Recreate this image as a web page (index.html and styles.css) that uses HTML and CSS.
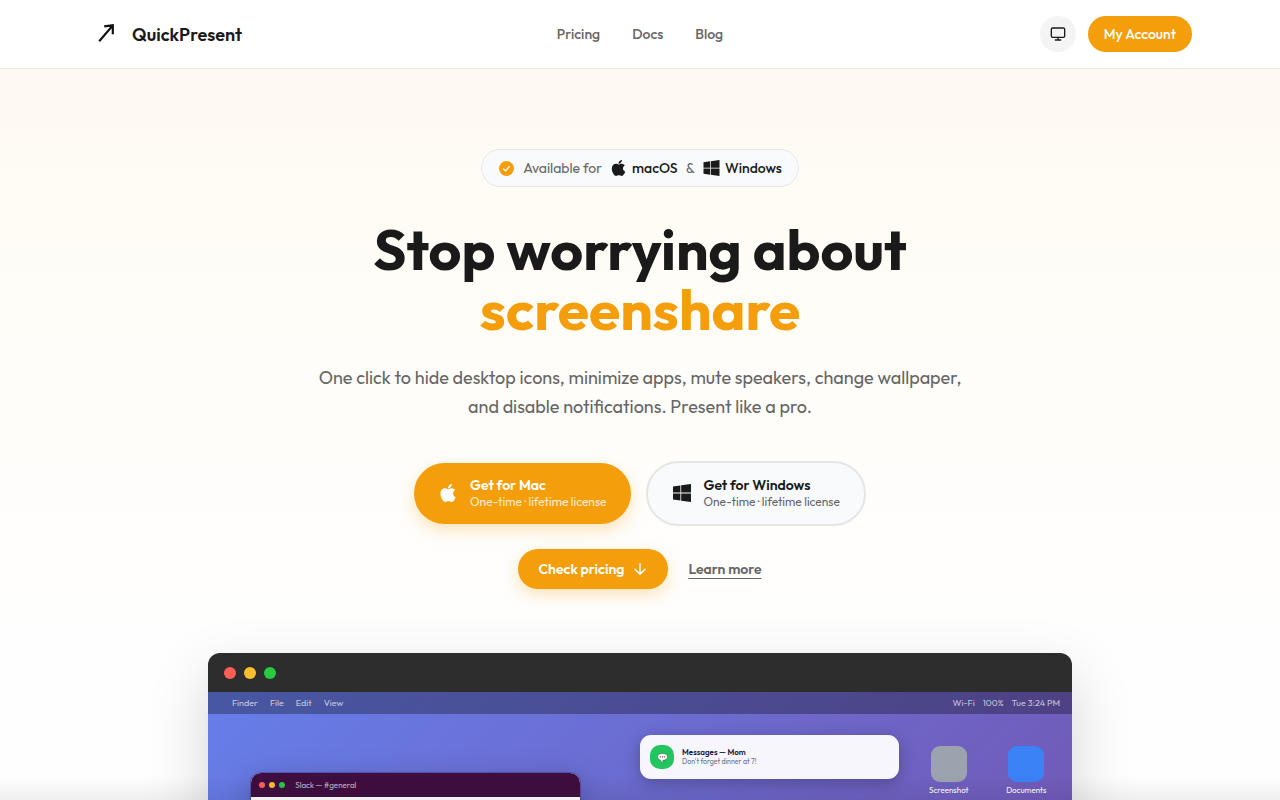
FILE: index.html
```html
<!DOCTYPE html>
<html lang="en">
<head>
<meta charset="utf-8">
<meta name="viewport" content="width=device-width, initial-scale=1">
<title>QuickPresent</title>
<link rel="stylesheet" href="styles.css">
</head>
<body>
<svg class="symbols" aria-hidden="true">
  <symbol id="apple" viewBox="0 32 384 448"><path d="M318.7 268.7c-.2-36.7 16.4-64.4 50-84.8-18.8-26.9-47.2-41.7-84.7-44.6-35.5-2.8-74.3 20.7-88.5 20.7-15 0-49.4-19.7-76.4-19.7C63.3 141.2 4 184.8 4 273.5q0 39.3 14.4 81.2c12.8 36.7 59 126.7 107.2 125.2 25.2-.6 43-17.9 75.8-17.9 31.8 0 48.3 17.9 76.4 17.9 48.6-.7 90.4-82.5 102.6-119.3-65.2-30.7-61.7-90-61.7-91.9zm-56.6-164.2c27.3-32.4 24.8-61.9 24-72.5-24.1 1.4-52 16.4-67.9 34.9-17.5 19.8-27.8 44.3-25.6 71.9 26.1 2 49.9-11.4 69.5-34.3z"/></symbol>
  <symbol id="windows" viewBox="0 32 448 448"><path d="M0 93.7l183.6-25.3v177.4H0V93.7zm0 324.6l183.6 25.3V268.4H0v149.9zm203.8 28L448 480V268.4H203.8v177.9zm0-380.6v180.1H448V32L203.8 65.7z"/></symbol>
</svg>

<header class="site-header">
  <div class="header-inner">
    <a class="brand" href="#">
      <svg class="brand-mark" viewBox="0 0 36 36" aria-hidden="true"><path d="M11.2 25.200 24.600 9.600M16.200 10.300l8.600-1v8.900"/></svg>
      <span>QuickPresent</span>
    </a>
    <nav class="nav">
      <a href="#">Pricing</a>
      <a href="#">Docs</a>
      <a href="#">Blog</a>
    </nav>
    <div class="header-actions">
      <button class="theme-button" type="button" aria-label="Theme">
        <svg viewBox="0 0 24 24" aria-hidden="true"><rect x="2" y="3" width="20" height="14" rx="2"/><path d="M12 17v4M8 21h8"/></svg>
      </button>
      <a class="account" href="#">My Account</a>
    </div>
  </div>
</header>

<main class="hero">
  <div class="badge">
    <svg class="badge-check" viewBox="0 0 16 16" aria-hidden="true"><circle cx="8" cy="8" r="7"/><path d="m5.200 8.400 1.900 1.800 3.700-4.200"/></svg>
    <span>Available for</span>
    <span class="platform"><svg class="icon-small" aria-hidden="true"><use href="#apple"/></svg>macOS</span>
    <span>&amp;</span>
    <span class="platform"><svg class="icon-small" aria-hidden="true"><use href="#windows"/></svg>Windows</span>
  </div>

  <h1 class="title">Stop worrying about <span class="accent">screenshare</span></h1>
  <p class="lead">One click to hide desktop icons, minimize apps, mute speakers, change wallpaper, and disable notifications. Present like a pro.</p>

  <div class="downloads">
    <a class="download primary" href="#">
      <svg class="icon-large" aria-hidden="true"><use href="#apple"/></svg>
      <span class="download-text"><strong>Get for Mac</strong><small>One-time · lifetime license</small></span>
    </a>
    <a class="download secondary" href="#">
      <svg class="icon-large" aria-hidden="true"><use href="#windows"/></svg>
      <span class="download-text"><strong>Get for Windows</strong><small>One-time · lifetime license</small></span>
    </a>
  </div>

  <div class="more">
    <a class="check-pricing" href="#">Check pricing
      <svg viewBox="0 0 16 16" aria-hidden="true"><path d="M8 2.700v10.600M2.900 8.200 8 13.300l5.100-5.100"/></svg>
    </a>
    <a class="learn" href="#">Learn more</a>
  </div>

  <section class="mockup">
    <div class="titlebar"><i class="dot red"></i><i class="dot yellow"></i><i class="dot green"></i></div>
    <div class="desktop">
      <div class="menubar">
        <div class="menu-left"><span>Finder</span><span>File</span><span>Edit</span><span>View</span></div>
        <div class="menu-right"><span>Wi-Fi</span><span>100%</span><span>Tue 3:24 PM</span></div>
      </div>
      <div class="app-window">
        <div class="app-bar"><i class="dot red"></i><i class="dot yellow"></i><i class="dot green"></i><span>Slack — #general</span></div>
      </div>
      <div class="notification">
        <span class="message-icon">
          <svg viewBox="0 0 12 12" aria-hidden="true"><path class="bubble" d="M6 1.500c3.200 0 5.400 1.500 5.400 3.800S9.200 9.100 6.200 9.100C6.200 10.300 7 11 8 11.300 5.800 11.500 4.100 10.600 3.700 8.800 1.800 8.200.6 7 .6 5.300.6 3 2.800 1.500 6 1.500z"/><path class="dots" d="M3 5.300h1.300M5.400 5.300h1.300M7.800 5.300h1.300"/></svg>
        </span>
        <span class="notification-text"><strong>Messages — Mom</strong><span>Don't forget dinner at 7!</span></span>
      </div>
      <div class="desktop-icons">
        <div class="file"><i class="file-icon gray"></i><span>Screenshot</span></div>
        <div class="file"><i class="file-icon blue"></i><span>Documents</span></div>
      </div>
    </div>
  </section>
</main>
<div class="bottom-shade"></div>
</body>
</html>
```
FILE: styles.css
```css
* { box-sizing: border-box; }
html { scrollbar-width: none; }
body {
  margin: 0;
  background: #fefefe;
  color: #1a1a1a;
  font-family: Outfit, Lato, sans-serif;
}
a { color: inherit; text-decoration: none; }
.symbols { position: absolute; width: 0; height: 0; }

.site-header { background: #fff; border-bottom: 1px solid #e8e5e3; }
.header-inner {
  display: grid;
  grid-template-columns: 1fr auto 1fr;
  align-items: center;
  max-width: 1152px;
  height: 68px;
  margin: 0 auto;
  padding: 0 24px;
}
.brand { display: flex; align-items: center; gap: 8px; font-size: 18px; font-weight: 600; }
.brand-mark { width: 36px; height: 36px; fill: none; stroke: #111; stroke-width: 2.2; }
.nav { display: flex; gap: 32px; color: #666; font-size: 14px; font-weight: 500; }
.header-actions { display: flex; justify-content: flex-end; align-items: center; gap: 12px; }
.theme-button {
  display: grid;
  place-items: center;
  width: 36px;
  height: 36px;
  padding: 0;
  border: 0;
  border-radius: 50%;
  background: #f4f4f4;
}
.theme-button svg {
  width: 16px;
  height: 16px;
  fill: none;
  stroke: #1a1a1a;
  stroke-width: 2;
  stroke-linecap: round;
  stroke-linejoin: round;
}
.account {
  padding: 0 16px;
  border-radius: 18px;
  background: #f59e0b;
  color: #fff;
  font-size: 14px;
  font-weight: 500;
  line-height: 36px;
}

.hero {
  display: flex;
  flex-direction: column;
  align-items: center;
  padding: 80px 24px;
  background: linear-gradient(#fef9f1 0, #fffcf5 120px, #fffdf9 300px, #fefefe 600px);
}
.badge {
  display: flex;
  align-items: center;
  gap: 8px;
  height: 38px;
  padding: 0 16px;
  border: 1px solid #e5e7e9;
  border-radius: 19px;
  background: #f8fafc;
  color: #666;
  font-size: 14px;
}
.badge-check { width: 17px; height: 17px; fill: #f59e0b; }
.badge-check path { fill: none; stroke: #fff; stroke-width: 1.2; stroke-linecap: round; stroke-linejoin: round; }
.platform { display: flex; align-items: center; gap: 5px; color: #1a1a1a; font-weight: 500; }
.icon-small { width: 17px; height: 16px; fill: currentColor; }
.title {
  max-width: 640px;
  margin: 32px 0 24px;
  font-size: 57px;
  font-weight: 700;
  line-height: 60px;
  text-align: center;
}
.accent { display: block; color: #f59e0b; }
.lead {
  max-width: 672px;
  margin: 0 0 40px;
  color: #666;
  font-size: 18px;
  line-height: 29px;
  text-align: center;
}
.downloads { display: flex; align-items: center; gap: 15px; margin-bottom: 23px; }
.download { display: flex; align-items: center; gap: 12px; padding: 13px 24px 14px; border-radius: 33px; }
.download-text { display: flex; flex-direction: column; }
.download strong { font-size: 14px; font-weight: 600; line-height: 18px; }
.download small { font-size: 12px; line-height: 16px; }
.primary { background: #f59e0b; color: #fff; box-shadow: 0 6px 16px rgba(245, 158, 11, .27); }
.primary small { opacity: .8; }
.secondary { border: 2px solid #e5e5e5; background: #f8fafc; }
.secondary small { color: #666; }
.icon-large { width: 20px; height: 18px; fill: currentColor; }
.more { display: flex; align-items: center; gap: 20px; margin-bottom: 64px; font-size: 14px; font-weight: 600; }
.check-pricing {
  display: flex;
  align-items: center;
  gap: 8px;
  height: 40px;
  padding: 0 20px;
  border-radius: 20px;
  background: #f59e0b;
  color: #fff;
  box-shadow: 0 6px 16px rgba(245, 158, 11, .27);
}
.check-pricing svg {
  width: 16px;
  height: 16px;
  fill: none;
  stroke: #fff;
  stroke-width: 1.4;
  stroke-linecap: round;
  stroke-linejoin: round;
}
.learn { color: #666; text-decoration: underline; text-decoration-thickness: 1px; text-underline-offset: 4px; }

.mockup {
  width: 100%;
  max-width: 864px;
  overflow: hidden;
  border-radius: 12px;
  box-shadow: 0 24px 60px rgba(0, 0, 0, .17);
}
.titlebar { display: flex; gap: 8px; padding: 14px 16px 13px; background: #2d2d2d; }
.dot { width: 12px; height: 12px; border-radius: 50%; }
.red { background: #ff5f57; }
.yellow { background: #febc2e; }
.green { background: #28c840; }
.desktop { position: relative; aspect-ratio: 16 / 10; background: linear-gradient(135deg, #667eea, #764ba2); }
.menubar {
  display: flex;
  justify-content: space-between;
  height: 22px;
  padding: 0 12px 0 24px;
  background: rgba(0, 0, 0, .3);
  color: rgba(255, 255, 255, .7);
  font-size: 9px;
  line-height: 22px;
}
.menu-left { display: flex; gap: 12px; }
.menu-right { display: flex; gap: 8px; }
.app-window {
  position: absolute;
  top: 15%;
  left: 5%;
  width: 38%;
  height: 60%;
  overflow: hidden;
  border-radius: 10px;
  background: #fff;
  box-shadow: 0 0 0 1px rgba(45, 20, 100, .3), 0 8px 30px rgba(0, 0, 0, .25);
}
.app-bar {
  display: flex;
  align-items: center;
  gap: 4px;
  height: 24px;
  padding: 0 8px;
  background: #3f0e40;
  color: rgba(255, 255, 255, .7);
  font-size: 8px;
}
.app-bar .dot { width: 6px; height: 6px; }
.app-bar span { margin-left: 6px; }
.notification {
  position: absolute;
  top: 8%;
  right: 20%;
  display: flex;
  align-items: center;
  gap: 8px;
  width: 30%;
  height: 44px;
  padding: 0 10px;
  border-radius: 11px;
  background: #f7f6fd;
  box-shadow: 0 4px 16px rgba(0, 0, 0, .25);
}
.message-icon { display: grid; place-items: center; width: 24px; height: 24px; border-radius: 10px; background: #22c55e; }
.message-icon svg { width: 11px; height: 11px; }
.bubble { fill: #fff; stroke: #35523f; stroke-width: .5; }
.dots { fill: none; stroke: #a3434a; stroke-width: 1.2; }
.notification-text { display: flex; flex-direction: column; color: #6b7280; font-size: 7px; line-height: 10px; }
.notification-text strong { color: #1e1b3a; font-size: 8px; font-weight: 600; }
.desktop-icons { position: absolute; top: 10%; right: 12px; display: grid; grid-template-columns: 1fr 1fr; gap: 10px; width: 145px; }
.file { display: flex; flex-direction: column; align-items: center; gap: 3px; color: #fff; font-size: 8px; line-height: 11px; }
.file-icon { width: 36px; height: 36px; border-radius: 9px; }
.gray { background: #9ca3af; }
.blue { background: #3b82f6; }

.bottom-shade {
  position: fixed;
  right: 0;
  bottom: 0;
  left: 0;
  height: 24px;
  background: linear-gradient(transparent, rgba(0, 0, 0, .06));
  pointer-events: none;
}
```
